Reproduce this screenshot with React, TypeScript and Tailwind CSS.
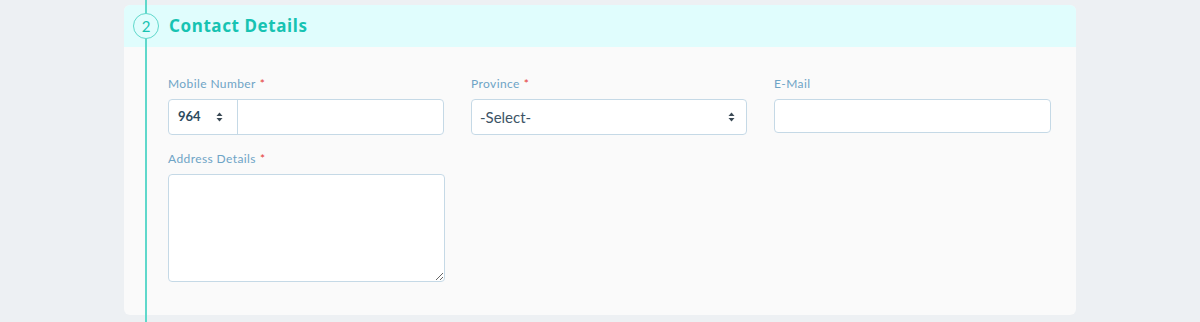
import React from 'react';

const FONT = { fontFamily: 'Lato, "Noto Sans", sans-serif' };

function Label({ text, required }: { text: string; required?: boolean }) {
  return (
    <label className="mb-[7px] block text-[12px] leading-[16px] tracking-[0.4px] text-[#6ea4c6]">
      {text}
      {required && <span className="ml-[4px] text-[#e53935]">*</span>}
    </label>
  );
}

function UpDown() {
  return (
    <svg width="7" height="10" viewBox="0 0 7 10" className="text-[#3b4a55]">
      <path d="M3.5 0.5 L6.5 4 H0.5 Z" fill="currentColor" />
      <path d="M3.5 9.5 L6.5 6 H0.5 Z" fill="currentColor" />
    </svg>
  );
}

export default function App() {
  return (
    <div className="relative h-[322px] w-[1200px] overflow-hidden bg-[#edf0f3] pt-[5px]" style={FONT}>
      {/* timeline line */}
      <div className="absolute left-[145px] top-0 z-10 h-full w-[2px] bg-[#5fd8cb]" />

      <div className="ml-[124px] w-[952px] overflow-hidden rounded-[6px] bg-[#fafafa]">
        {/* Header */}
        <div className="flex h-[42px] items-center bg-[#e0fdfd]">
          <div className="relative z-20 ml-[9px] flex h-[26px] w-[26px] items-center justify-center rounded-full border-[1.5px] border-[#5fd8cb] bg-[#e0fdfd] text-[15px] text-[#17c3b2]">
            2
          </div>
          <h2
            className="ml-[10px] text-[17px] font-bold tracking-[0.6px] text-[#17c3b2]"
            style={{ fontFamily: '"Noto Sans", sans-serif' }}
          >
            Contact Details
          </h2>
        </div>

        {/* Body */}
        <div className="pb-[33px] pl-[44px] pr-[26px] pt-[29px]">
          <div className="grid grid-cols-[276px_276px_277px] gap-x-[27px]">
            <div>
              <Label text="Mobile Number" required />
              <div className="flex h-[36px] rounded-[4px] border border-[#c5d9e6] bg-white">
                <div className="flex w-[69px] items-center justify-between border-r border-[#c5d9e6] pl-[9px] pr-[14px]">
                  <span className="text-[13px] font-bold text-[#2c4a5e]">964</span>
                  <UpDown />
                </div>
                <div className="flex-1" />
              </div>
            </div>
            <div>
              <Label text="Province" required />
              <div className="flex h-[36px] items-center justify-between rounded-[4px] border border-[#c5d9e6] bg-white pl-[8px] pr-[11px]">
                <span className="text-[15px] text-[#3d5466]">-Select-</span>
                <UpDown />
              </div>
            </div>
            <div>
              <Label text="E-Mail" />
              <div className="h-[34px] rounded-[4px] border border-[#c5d9e6] bg-white" />
            </div>
          </div>

          <div className="mt-[16px] w-[277px]">
            <Label text="Address Details" required />
            <textarea className="block h-[108px] w-full resize rounded-[4px] border border-[#c5d9e6] bg-white outline-none" />
          </div>
        </div>
      </div>
    </div>
  );
}
